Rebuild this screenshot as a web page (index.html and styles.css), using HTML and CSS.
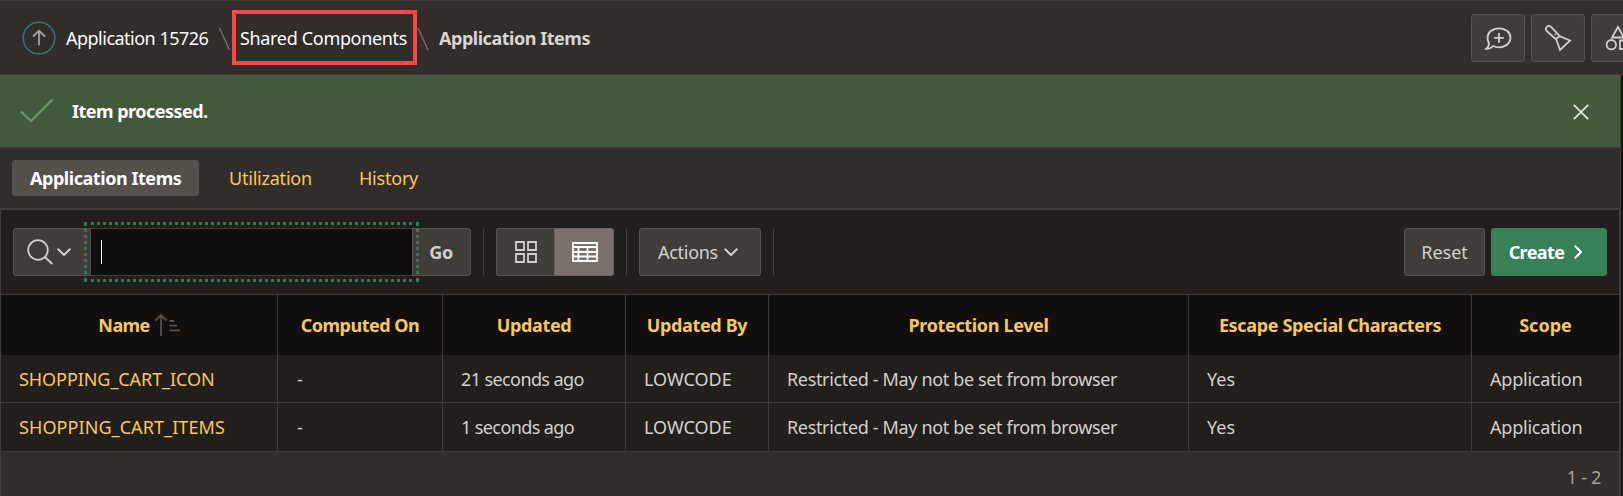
FILE: index.html
```html
<!DOCTYPE html>
<html lang="en">
<head>
<meta charset="utf-8">
<title>Application Items</title>
<link rel="stylesheet" href="styles.css">
</head>
<body>
<header class="topbar">
  <nav class="crumbs">
    <a class="up"><svg width="34" height="34" viewBox="0 0 34 34"><circle cx="17" cy="17" r="15.800" class="ring"/><path d="M17 24.500V10M11 15.500L17 9.800L23 15.500" class="up-arrow"/></svg></a>
    <a class="crumb crumb-app"><span>Application 15726</span></a>
    <svg class="slash" width="13" height="24" viewBox="0 0 13 24"><path d="M1.500 1L11.500 23"/></svg>
    <a class="crumb crumb-marked"><span>Shared Components</span></a>
    <svg class="slash" width="13" height="24" viewBox="0 0 13 24"><path d="M1 1L11 23"/></svg>
    <span class="crumb current"><span>Application Items</span></span>
  </nav>
  <div class="tools">
    <button class="btn tool"><svg width="28" height="28" viewBox="0 0 28 28"><path d="M5 19C4 17.300 3.500 15.500 3.500 13.800C3.500 8.500 8.300 4.300 15 4.300S26.500 8.500 26.500 13.800S21.500 23.300 15 23.300C12.800 23.300 10.800 22.800 9.200 22C7.300 24 4.800 25 2.300 24.800C4.200 23.300 5 21.500 5 19ZM15 9V18.800M10.100 13.900H19.900"/></svg></button>
    <button class="btn tool"><svg width="28" height="28" viewBox="0 0 28 28"><path d="M12.300 15.500L2.600 6.800A3 3 0 0 1 6.800 2.600L16.100 12.300M12.300 15.500L16.100 26L26.100 16.500L16.100 12.300C15.100 12.300 12.300 14.500 12.300 15.500ZM10.800 9.900L11.800 10.900"/></svg></button>
    <button class="btn tool"><svg width="28" height="28" viewBox="0 0 28 28"><path d="M14 3L20 13.500H8ZM16 16.500H25V25H16Z"/><circle cx="7.300" cy="20.700" r="4.700"/></svg></button>
  </div>
</header>
<main class="page">
  <section class="alert">
    <svg class="check" width="34" height="26" viewBox="0 0 34 26"><path d="M1 13.500L11 23L32.500 1.500"/></svg>
    <strong><span>Item processed.</span></strong>
    <svg class="close" width="16" height="16" viewBox="0 0 16 16"><path d="M.8 .8L15.200 15.200M15.200 .8L.8 15.200"/></svg>
  </section>
  <nav class="tabs">
    <a class="tab active"><span>Application Items</span></a>
    <a class="tab tab-util"><span>Utilization</span></a>
    <a class="tab"><span>History</span></a>
  </nav>
  <section class="report">
    <div class="toolbar">
      <div class="search">
        <button class="btn finder"><svg width="26" height="26" viewBox="0 0 26 26"><circle cx="11" cy="11" r="9.800"/><path d="M18 18L25.300 25"/></svg><svg class="chevron" width="14" height="8" viewBox="0 0 14 8"><path d="M.7 .8L7 7L13.300 .8"/></svg></button>
        <div class="field"><i class="caret"></i></div>
        <button class="btn go"><b>Go</b></button>
      </div>
      <div class="group views">
        <button class="btn view"><svg width="22" height="22" viewBox="0 0 22 22"><path d="M1 1H9V9H1ZM13 1H21V9H13ZM1 13H9V21H1ZM13 13H21V21H13Z"/></svg></button>
        <button class="btn view selected"><svg width="26" height="20" viewBox="0 0 26 20"><path d="M1 1H25V19H1ZM1 5H25M1 10H25M1 14.500H25M6.500 5V19M15.500 5V19"/></svg></button>
      </div>
      <div class="group actions"><button class="btn"><span>Actions</span><svg class="chevron" width="14" height="8" viewBox="0 0 14 8"><path d="M.7 .8L7 7L13.300 .8"/></svg></button></div>
      <div class="right">
        <button class="btn reset"><span>Reset</span></button>
        <button class="btn create"><b>Create</b><svg class="chevron" width="8" height="14" viewBox="0 0 8 14"><path d="M.8 .7L7 7L.8 13.300"/></svg></button>
      </div>
    </div>
    <table class="grid">
      <colgroup><col class="c1"><col class="c2"><col class="c3"><col class="c4"><col class="c5"><col class="c6"><col></colgroup>
      <thead><tr>
        <th><div class="sorted"><span>Name</span><svg width="25" height="22" viewBox="0 0 25 22"><path d="M6 22V1M.5 6.500L6 1L11.500 6.500M14.500 7H19M14.500 11.700H22M14.500 16.300H25"/></svg></div></th>
        <th class="tighter"><span>Computed On</span></th><th><span>Updated</span></th><th><span>Updated By</span></th><th><span>Protection Level</span></th><th><span>Escape Special Characters</span></th><th class="normal"><span>Scope</span></th>
      </tr></thead>
      <tbody>
        <tr><td><a class="icon-name">SHOPPING_CART_ICON</a></td><td class="dash"><span>-</span></td><td class="time"><span>21 seconds ago</span></td><td class="normal"><span>LOWCODE</span></td><td><span>Restricted - May not be set from browser</span></td><td class="normal"><span>Yes</span></td><td class="scope"><span>Application</span></td></tr>
        <tr><td><a>SHOPPING_CART_ITEMS</a></td><td class="dash"><span>-</span></td><td class="time"><span>1 seconds ago</span></td><td class="normal"><span>LOWCODE</span></td><td><span>Restricted - May not be set from browser</span></td><td class="normal"><span>Yes</span></td><td class="scope"><span>Application</span></td></tr>
      </tbody>
    </table>
    <footer class="pager"><span>1 - 2</span></footer>
  </section>
</main>
</body>
</html>
```
FILE: styles.css
```css
* { box-sizing: border-box; }
body {
  margin: 0;
  height: 496px;
  overflow: hidden;
  background: #161310;
  color: #d2d0cd;
  font: 18px/24px "Noto Sans", "Open Sans", sans-serif;
}
svg { display: block; flex: none; fill: none; stroke: currentColor; stroke-width: 1.8; }
button { font: inherit; color: inherit; margin: 0; padding: 0; }
span, b { white-space: nowrap; }

.topbar {
  display: flex;
  height: 75px;
  width: 1645px;
  border-top: 1px solid #403c38;
  border-bottom: 1px solid #403c38;
  background: #312d2a;
}
.crumbs { display: flex; align-items: flex-start; padding: 9px 0 0 22px; }
.up { color: #a5a29e; margin: 11px 0 0; }
.ring { stroke: #41717c; stroke-width: 1.5; }
.crumb { height: 55px; display: flex; align-items: center; color: #fff; }
.crumb-app { width: 162px; padding-left: 10px; letter-spacing: -.51px; }
.slash { color: #77736f; margin-top: 17px; stroke-width: 1.3; }
.crumb-marked { width: 185px; border: 4px solid #ff4545; padding-left: 4px; margin-left: 1px; letter-spacing: -.33px; }
.current { color: #d8d6d2; font-weight: 700; padding-left: 9px; letter-spacing: -.47px; }
.tools { display: flex; gap: 6px; margin-left: auto; padding: 13px 0 0; }

.btn {
  display: flex;
  align-items: center;
  justify-content: center;
  height: 48px;
  border: 1px solid #55514b;
  border-radius: 3px;
  background: #403c38;
}
.tool { width: 54px; }

.page { width: 1621px; border-right: 1px solid #403c38; background: #312d2a; }
.alert {
  display: flex;
  align-items: center;
  height: 73px;
  padding: 0 31px 0 20px;
  border-bottom: 1px solid #453f3b;
  background: #43593e;
  color: #fff;
  letter-spacing: -.52px;
}
.check { color: #6b9362; stroke-width: 2.4; margin-right: 18px; }
.close { margin: 1px 0 0 auto; color: #e4e6e0; stroke-width: 1.7; }

.tabs { display: flex; height: 60px; padding: 12px; }
.tab { display: flex; align-items: center; height: 36px; padding: 0 18px; color: #fac858; letter-spacing: -.22px; }
.tab-util { padding-left: 30px; width: 142px; }
.active { width: 187px; color: #fff; font-weight: 700; background: #54504a; border-radius: 3px; letter-spacing: -.45px; }

.report { border: 2px solid #403c38; border-width: 2px 1px 0; height: 288px; background: #221e1b; }
.toolbar { display: flex; height: 84px; padding: 18px 12px 0; }
.search { display: flex; width: 458px; }
.finder { width: 78px; gap: 4px; border-radius: 3px 0 0 3px; padding-right: 6px; }
.chevron { stroke-width: 2; }
.field {
  width: 321px;
  height: 46px;
  margin: 1px 0;
  padding: 11px 0 0 10px;
  box-shadow: 0 -1px #403c38, 0 1px #403c38;
  background: #100f0e;
  outline: 3px dotted #35784f;
  outline-offset: 4px;
  position: relative;
}
.caret { display: block; width: 1px; height: 24px; background: #fff; }
.go { width: 59px; border-radius: 0 3px 3px 0; padding-right: 1px; letter-spacing: -.3px; }
.group { display: flex; height: 48px; margin-left: 12px; padding-left: 12px; border-left: 1px solid #403c38; }
.view { width: 58px; border-radius: 3px 0 0 3px; border-right: 0; }
.selected { width: 60px; border: 1px solid #68615c; border-radius: 0 3px 3px 0; padding-left: 1px; background: #7b716c; color: #fff; }
.actions { box-sizing: content-box; width: 122px; padding-right: 12px; border-right: 1px solid #403c38; }
.actions .btn { width: 122px; gap: 6px; padding-right: 4px; letter-spacing: -.3px; }
.right { display: flex; gap: 6px; margin-left: auto; }
.reset { width: 81px; }
.create { width: 116px; gap: 10px; padding-right: 7px; border-color: #388157; background: #388157; color: #fff; letter-spacing: -.6px; }

.grid { width: 1618px; table-layout: fixed; border-collapse: separate; border-spacing: 0; }
.c1 { width: 277px; }
.c2 { width: 165px; }
.c3 { width: 183px; }
.c4 { width: 143px; }
.c5 { width: 420px; }
.c6 { width: 283px; }
th, td { border-top: 1px solid #403c38; border-right: 1px solid #403c38; letter-spacing: -.35px; }
th:last-child, td:last-child { border-right: 0; }
th { height: 61px; padding: 0; background: #100f0e; color: #fac858; text-align: center; }
td { height: 48px; padding: 0 18px; }
td a { color: #fac858; letter-spacing: .08px; }
td .icon-name { letter-spacing: -.07px; }
.tighter { letter-spacing: -.5px; }
.normal { letter-spacing: 0; }
.time { letter-spacing: -.6px; }
.scope { letter-spacing: -.22px; }
.dash { padding-left: 19px; }
tbody tr:first-child td { border-top: 0; height: 47px; }
tbody tr:nth-child(2) td { height: 49px; }
.sorted { display: flex; justify-content: center; align-items: center; gap: 5px; letter-spacing: -.6px; }
.sorted svg { color: #55514d; }
.pager { height: 46px; padding: 13px 18px 0 0; border-top: 1px solid #403c38; background: #312d2a; color: #a5a29e; text-align: right; letter-spacing: -.3px; }
```
